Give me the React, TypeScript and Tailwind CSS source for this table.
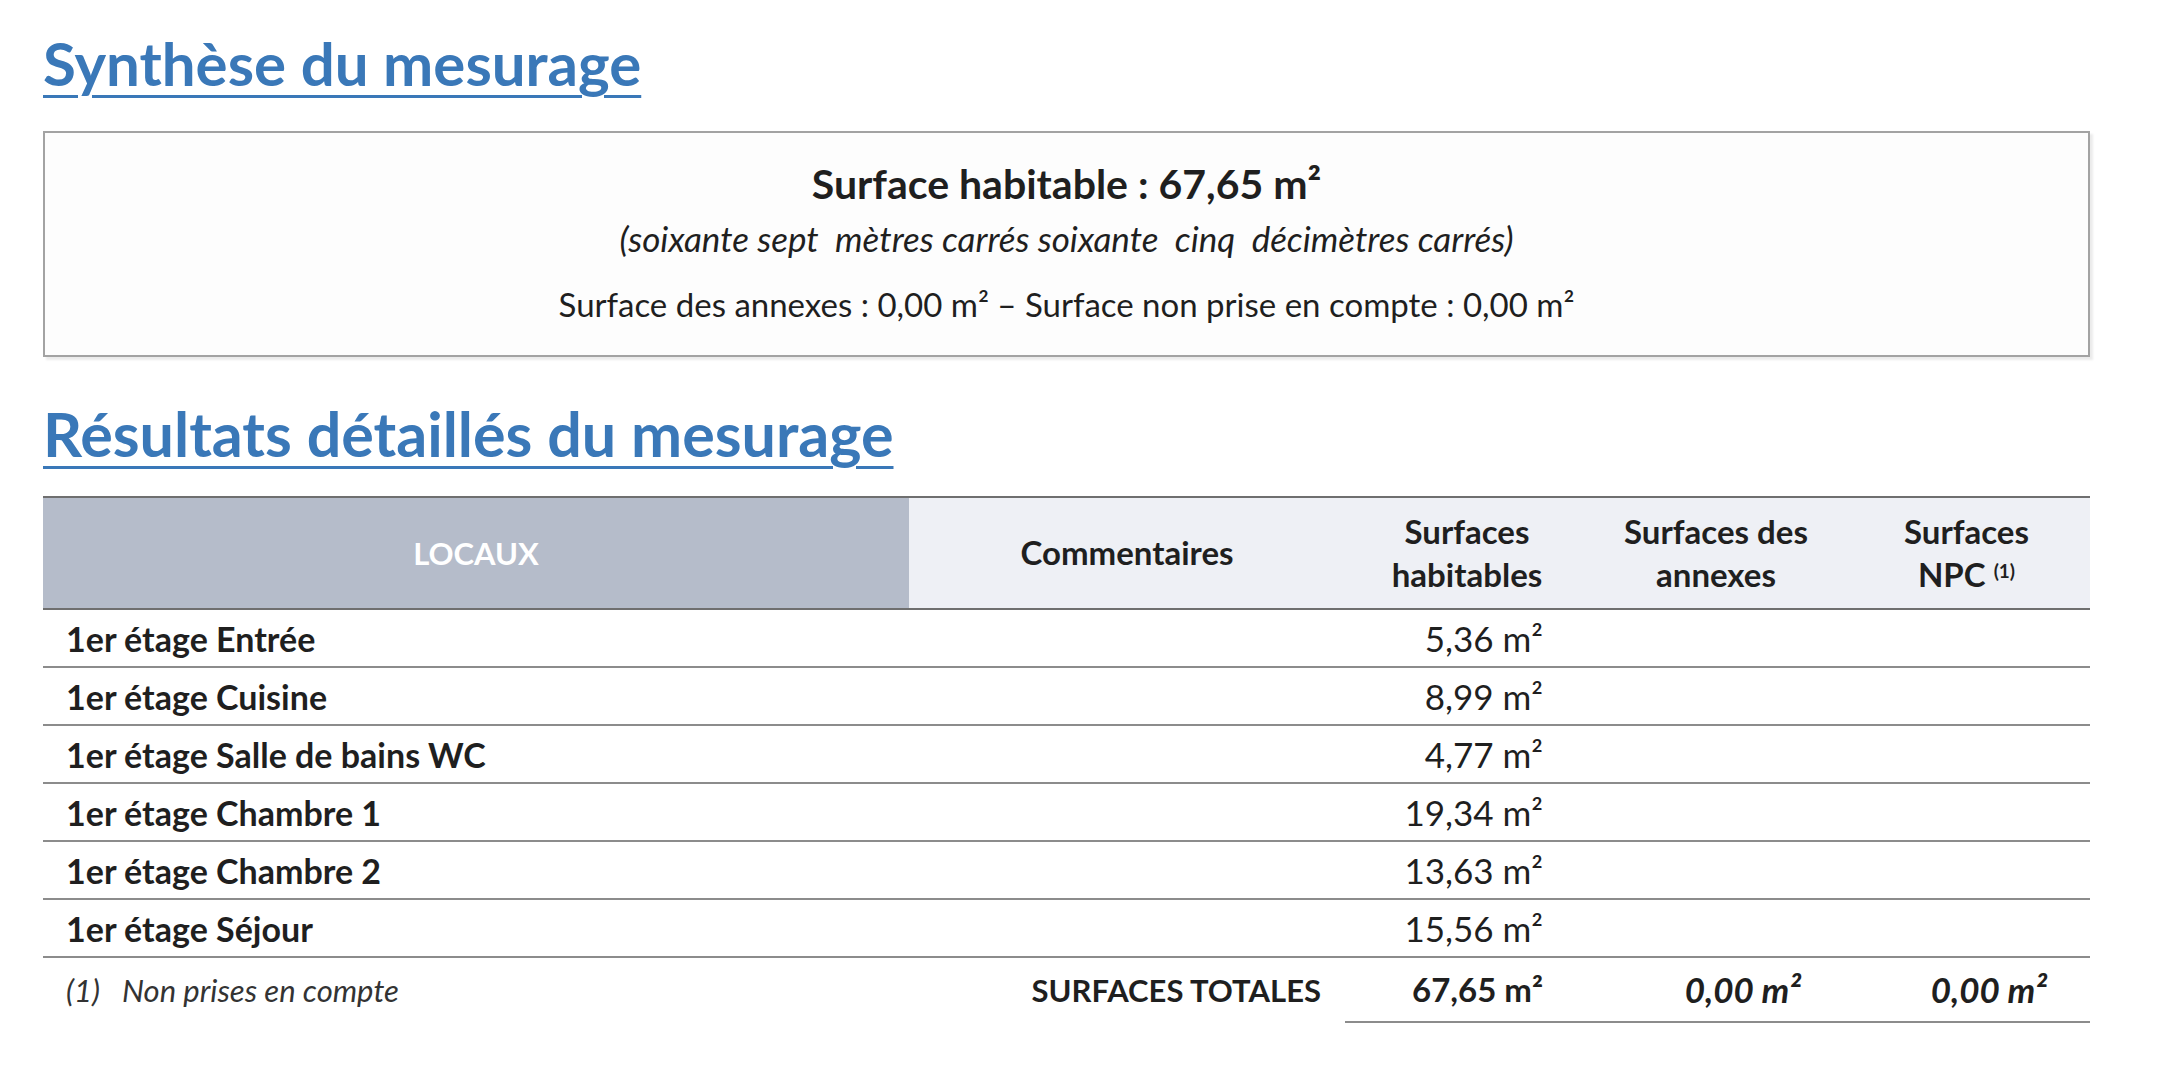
import React from 'react';

const rows = [
  { name: '1er étage Entrée', value: '5,36 m²' },
  { name: '1er étage Cuisine', value: '8,99 m²' },
  { name: '1er étage Salle de bains WC', value: '4,77 m²' },
  { name: '1er étage Chambre 1', value: '19,34 m²' },
  { name: '1er étage Chambre 2', value: '13,63 m²' },
  { name: '1er étage Séjour', value: '15,56 m²' },
];

const App: React.FC = () => {
  return (
    <div className="min-h-[1080px] w-[2169px] bg-white font-['Lato','Liberation_Sans',sans-serif] text-[#1f1f1f]">
      <div className="ml-[43px] w-[2047px] pt-[33px]">
        {/* Synthèse */}
        <h1 className="text-[60px] leading-none font-bold text-[#3a78b8] underline decoration-[3px] underline-offset-[9px]">
          Synthèse du mesurage
        </h1>

        <div className="mt-[38px] h-[226px] border-2 border-[#a3a3a3] bg-[#fdfdfd] shadow-[3px_3px_2px_rgba(0,0,0,0.08)] flex flex-col items-center pt-[29px]">
          <p className="text-[41px] leading-[44px] font-bold">Surface habitable : 67,65 m²</p>
          <p className="mt-[12px] text-[35px] leading-[40px] italic whitespace-pre">
            (soixante sept  mètres carrés soixante  cinq  décimètres carrés)
          </p>
          <p className="mt-[26px] text-[33px] leading-[40px]">
            Surface des annexes : 0,00 m² – Surface non prise en compte : 0,00 m²
          </p>
        </div>

        {/* Résultats */}
        <h2 className="mt-[46px] text-[61px] leading-none font-bold text-[#3a78b8] underline decoration-[3px] underline-offset-[9px]">
          Résultats détaillés du mesurage
        </h2>

        <div className="mt-[32px] grid grid-cols-[866px_436px_244px_254px_247px] text-[34px]">
          {/* header */}
          <div className="h-[114px] border-t-2 border-b-2 border-[#6f6f6f] bg-[#b5bcca] flex items-center justify-center font-bold text-white text-[31px]">
            LOCAUX
          </div>
          <div className="h-[114px] border-t-2 border-b-2 border-[#6f6f6f] bg-[#eef0f5] flex items-center justify-center font-bold text-[33px]">
            Commentaires
          </div>
          <div className="h-[114px] border-t-2 border-b-2 border-[#6f6f6f] bg-[#eef0f5] flex items-center justify-center text-center font-bold text-[33px] leading-[43px]">
            Surfaces<br />habitables
          </div>
          <div className="h-[114px] border-t-2 border-b-2 border-[#6f6f6f] bg-[#eef0f5] flex items-center justify-center text-center font-bold text-[33px] leading-[43px]">
            Surfaces des<br />annexes
          </div>
          <div className="h-[114px] border-t-2 border-b-2 border-[#6f6f6f] bg-[#eef0f5] flex items-center justify-center text-center font-bold text-[33px] leading-[43px]">
            <span>
              Surfaces<br />NPC <sup className="text-[19px]">(1)</sup>
            </span>
          </div>

          {/* rows */}
          {rows.map((r) => (
            <React.Fragment key={r.name}>
              <div className="h-[58px] border-b-2 border-[#8c8c8c] flex items-center pl-[23px] font-bold">{r.name}</div>
              <div className="h-[58px] border-b-2 border-[#8c8c8c]" />
              <div className="h-[58px] border-b-2 border-[#8c8c8c] flex items-center justify-end pr-[46px] text-[35px]">{r.value}</div>
              <div className="h-[58px] border-b-2 border-[#8c8c8c]" />
              <div className="h-[58px] border-b-2 border-[#8c8c8c]" />
            </React.Fragment>
          ))}

          {/* totals */}
          <div className="h-[65px] flex items-center pl-[23px] italic text-[31px] text-[#333]">
            <span>(1)</span>
            <span className="ml-[22px]">Non prises en compte</span>
          </div>
          <div className="h-[65px] flex items-center justify-end pr-[24px] font-bold text-[31px]">SURFACES TOTALES</div>
          <div className="h-[65px] border-b-2 border-[#8c8c8c] flex items-center justify-end pr-[46px] font-bold text-[33px]">67,65 m²</div>
          <div className="h-[65px] border-b-2 border-[#8c8c8c] flex items-center justify-end pr-[42px] font-bold italic text-[35px]">0,00 m²</div>
          <div className="h-[65px] border-b-2 border-[#8c8c8c] flex items-center justify-end pr-[43px] font-bold italic text-[35px]">0,00 m²</div>
        </div>
      </div>
    </div>
  );
};

export default App;
